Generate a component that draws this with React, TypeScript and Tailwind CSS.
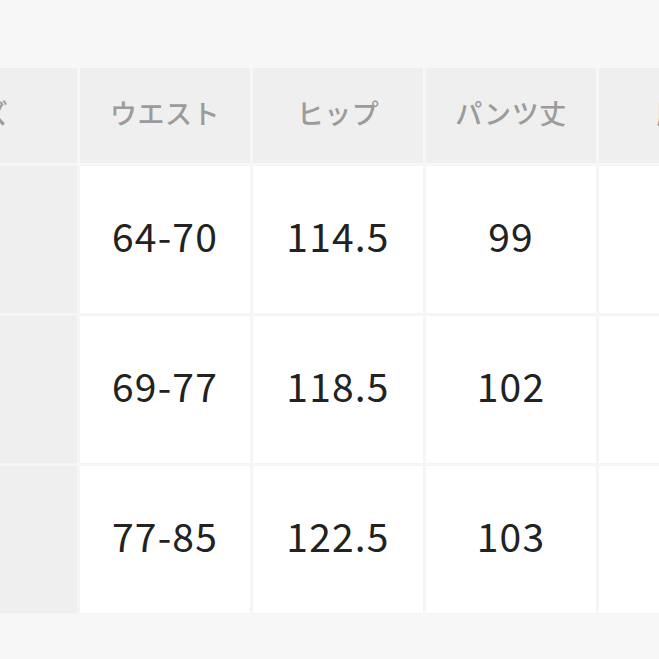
const headers = ["サイズ", "ウエスト", "ヒップ", "パンツ丈", "股下"];

const rows = [
  ["S", "64-70", "114.5", "99", "74"],
  ["M", "69-77", "118.5", "102", "76"],
  ["L", "77-85", "122.5", "103", "76"],
];

const font = { fontFamily: '"Noto Sans CJK JP", "Noto Sans", sans-serif' };

export default function App() {
  return (
    <div
      className="w-[659px] h-[659px] overflow-hidden bg-[#f7f7f7] pt-[68px]"
      style={font}
    >
      <div className="ml-[-142px] flex flex-col gap-[3px] w-[1000px]">
        {/* Header */}
        <div className="flex gap-[3px] h-[95px]">
          {headers.map((h, i) => (
            <div
              key={h}
              className={`${
                i === 0 ? "w-[219px]" : "w-[170px]"
              } shrink-0 bg-[#efefef] flex items-center justify-center pb-[5px] text-[27px] font-medium text-[#9b9b9b] tracking-[0.02em]`}
            >
              {h}
            </div>
          ))}
        </div>

        {/* Rows */}
        {rows.map((row) => (
          <div key={row[0]} className="flex gap-[3px] h-[147px]">
            {row.map((cell, i) => (
              <div
                key={i}
                className={`${
                  i === 0
                    ? "w-[219px] bg-[#efefef] text-[#9b9b9b] text-[27px]"
                    : "w-[170px] bg-white text-[#222222] text-[39px] font-normal tracking-[0.03em]"
                } shrink-0 flex items-center justify-center pb-[8px] shadow-[0_0_2px_rgba(0,0,0,0.04)]`}
              >
                {cell}
              </div>
            ))}
          </div>
        ))}
      </div>
    </div>
  );
}
